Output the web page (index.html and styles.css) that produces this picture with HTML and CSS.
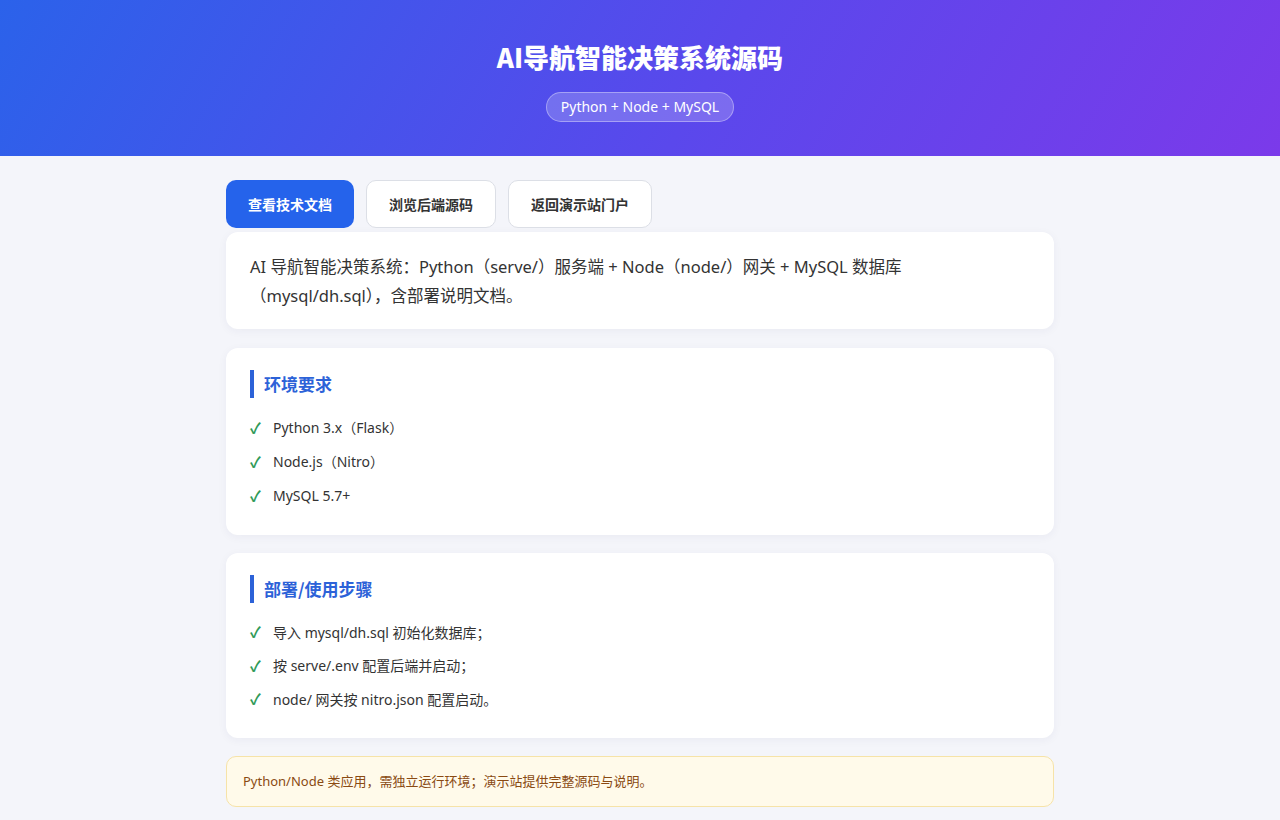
FILE: index.html
```html
<!DOCTYPE html>
<html lang="zh-CN">
<head>
    <meta charset="UTF-8">
    <meta name="viewport" content="width=device-width, initial-scale=1.0">
    <title>AI导航智能决策系统源码</title>
    <link rel="stylesheet" href="styles.css">
</head>
<body>
    <header class="hero">
        <h1 class="hero-title">AI导航智能决策系统源码</h1>
        <span class="hero-tag">Python + Node + MySQL</span>
    </header>

    <main class="wrap">
        <!-- 顶部操作按钮 -->
        <nav class="actions">
            <a class="btn btn-primary" href="#">查看技术文档</a>
            <a class="btn" href="#">浏览后端源码</a>
            <a class="btn" href="#">返回演示站门户</a>
        </nav>

        <section class="card intro">
            AI 导航智能决策系统：Python（serve/）服务端 + Node（node/）网关 + MySQL 数据库（mysql/dh.sql），含部署说明文档。
        </section>

        <section class="card">
            <h2 class="card-title">环境要求</h2>
            <ul class="checklist">
                <li>Python 3.x（Flask）</li>
                <li>Node.js（Nitro）</li>
                <li>MySQL 5.7+</li>
            </ul>
        </section>

        <section class="card steps">
            <h2 class="card-title">部署/使用步骤</h2>
            <ul class="checklist">
                <li>导入 mysql/dh.sql 初始化数据库；</li>
                <li>按 serve/.env 配置后端并启动；</li>
                <li>node/ 网关按 nitro.json 配置启动。</li>
            </ul>
        </section>

        <div class="notice">Python/Node 类应用，需独立运行环境；演示站提供完整源码与说明。</div>
    </main>
</body>
</html>
```

FILE: styles.css
```css
body {
    margin: 0;
    background-color: #f4f5fa;
    color: #333333;
    font-family: "Noto Sans", "Noto Sans CJK SC", sans-serif;
}

/* 顶部渐变横幅 */
.hero {
    display: flex;
    flex-direction: column;
    align-items: center;
    padding: 38px 0 34px;
    background: linear-gradient(120deg, #2b62ea 0%, #5a48ec 55%, #7b3aea 100%);
    color: #ffffff;
}

.hero-title {
    margin: 0;
    font-size: 26px;
    line-height: 38px;
    font-weight: 900;
    font-family: "Noto Sans CJK SC", sans-serif;
}

.hero-tag {
    margin-top: 16px;
    height: 28px;
    line-height: 28px;
    padding: 0 14px;
    border: 1px solid rgba(255, 255, 255, 0.35);
    border-radius: 16px;
    background-color: rgba(255, 255, 255, 0.2);
    font-size: 14px;
}

.wrap {
    max-width: 828px;
    margin: 0 auto;
    padding: 24px 0 98px;
}

.actions {
    display: flex;
    gap: 12px;
    margin-bottom: 4px;
}

.btn {
    display: flex;
    align-items: center;
    height: 48px;
    box-sizing: border-box;
    padding: 0 22px;
    border: 1px solid #dcdfe6;
    border-radius: 10px;
    background-color: #ffffff;
    color: #333333;
    font-family: "Noto Sans CJK SC", sans-serif;
    font-size: 14px;
    font-weight: 700;
    text-decoration: none;
}

.btn-primary {
    border: none;
    background-color: #2563eb;
    color: #ffffff;
}

.card {
    background-color: #ffffff;
    border-radius: 12px;
    padding: 22px 24px 23px;
    margin-bottom: 18px;
    box-shadow: 0 2px 10px rgba(30, 40, 90, 0.05);
}

.intro {
    padding: 20px 24px 19px;
    margin-bottom: 19px;
    font-size: 16.5px;
    line-height: 29px;
    color: #333333;
}

.card-title {
    margin: 0 0 12px;
    padding-left: 10px;
    border-left: 4px solid #2c62d8;
    height: 28px;
    line-height: 28px;
    font-size: 17px;
    font-weight: 700;
    color: #2c62d8;
    font-family: "Noto Sans CJK SC", sans-serif;
}

.checklist {
    list-style: none;
    margin: 0;
    padding: 0;
}

.checklist li {
    display: flex;
    align-items: center;
    height: 34px;
    font-size: 14px;
    color: #333333;
}

.steps {
    padding-bottom: 22px;
}

.steps .checklist li {
    height: 33.5px;
}

.checklist li::before {
    content: "✓";
    width: 23px;
    color: #2f9a58;
    font-size: 15px;
    font-weight: 700;
}

.notice {
    padding: 16px;
    border: 1px solid #f6e3a8;
    border-radius: 10px;
    background-color: #fffaea;
    color: #8a4a12;
    font-size: 13px;
    line-height: 17px;
}
```
